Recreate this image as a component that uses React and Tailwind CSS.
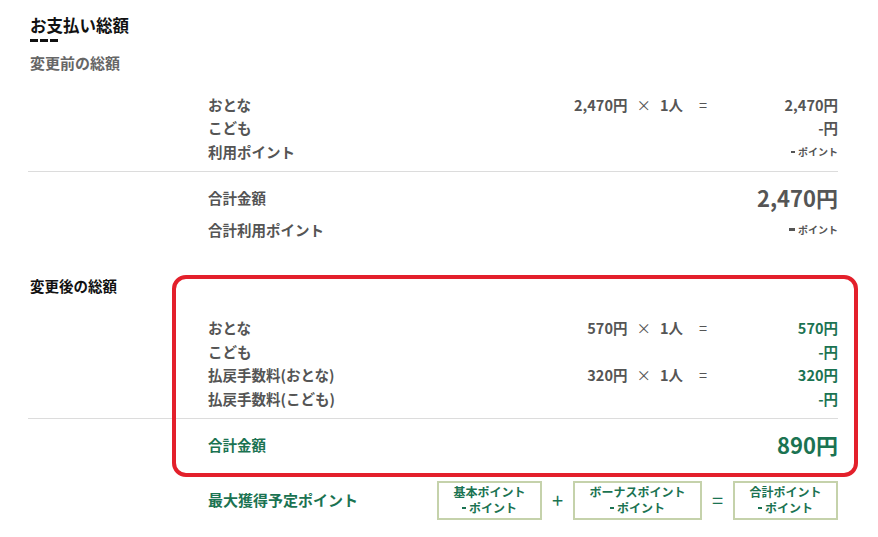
const font = { fontFamily: '"Noto Sans CJK JP", "Noto Sans", sans-serif' }

function Unit({ price }) {
  return (
    <span className="whitespace-pre">
      {price}
      <span className="mx-[9px] font-normal">×</span>
      1人
    </span>
  )
}

function Row({ label, price, amount, green = false }) {
  return (
    <div className="flex items-center h-[23.5px] text-[14.5px] font-bold text-[#555]">
      <span className="flex-1">{label}</span>
      {price && <Unit price={price} />}
      <span className="w-[40px] text-center font-normal">{price ? '=' : ''}</span>
      <span className={`w-[115px] text-right ${green ? 'text-[#1b7352]' : ''}`}>{amount}</span>
    </div>
  )
}

function NoPoint({ big = false }) {
  return (
    <span className="flex items-center text-[10px] font-bold">
      <span className={`${big ? 'w-[6px] h-[3px] mr-[3px]' : 'w-[4px] h-[1.5px] mr-[3px]'} bg-current`} />
      ポイント
    </span>
  )
}

function PointBox({ title, w }) {
  return (
    <div className={`${w} h-[39px] border-2 border-[#c5d2ab] flex flex-col items-center justify-center text-[12px] leading-[16px] font-bold text-[#1b7352]`}>
      <span>{title}</span>
      <span className="flex items-center">
        <span className="w-[4px] h-[1.5px] bg-current mr-[3px]" />
        ポイント
      </span>
    </div>
  )
}

export default function App() {
  return (
    <div style={font} className="relative w-[878px] h-[537px] bg-white overflow-hidden">
      <div className="pl-[28px] pr-[40px] pt-[14px]">
        <div className="pl-[2px] text-[16.5px] leading-[22px] font-bold text-[#111]">お支払い総額</div>
        <div className="pl-[2px] mt-[3px] flex gap-[2px]">
          <span className="w-[8px] h-[3px] bg-[#111]" />
          <span className="w-[8px] h-[3px] bg-[#111]" />
          <span className="w-[8px] h-[3px] bg-[#111]" />
        </div>
        <div className="pl-[2px] mt-[11px] text-[15px] leading-[20px] font-bold text-[#666]">変更前の総額</div>

        <div className="pl-[180px] mt-[20px]">
          <Row label="おとな" price="2,470円" amount="2,470円" />
          <Row label="こども" amount="-円" />
          <div className="flex items-center h-[23.5px] text-[14.5px] font-bold text-[#555]">
            <span className="flex-1">利用ポイント</span>
            <NoPoint />
          </div>
        </div>
        <div className="mt-[7px] h-px bg-[#dcdcdc]" />
        <div className="pl-[180px] mt-[11px] flex items-center h-[30px] font-bold text-[#555]">
          <span className="flex-1 text-[14.5px]">合計金額</span>
          <span className="text-[22px]">2,470円</span>
        </div>
        <div className="pl-[180px] mt-[6px] flex items-center h-[22px] font-bold text-[#555]">
          <span className="flex-1 text-[14.5px]">合計利用ポイント</span>
          <NoPoint big />
        </div>

        <div className="pl-[2px] mt-[35px] text-[14.5px] leading-[20px] font-bold text-[#111]">変更後の総額</div>
        <div className="pl-[180px] mt-[21px]">
          <Row label="おとな" price="570円" amount="570円" green />
          <Row label="こども" amount="-円" green />
          <Row label="払戻手数料(おとな)" price="320円" amount="320円" green />
          <Row label="払戻手数料(こども)" amount="-円" green />
        </div>
        <div className="mt-[7px] h-px bg-[#dcdcdc]" />
        <div className="pl-[180px] mt-[11px] flex items-center h-[30px] font-bold text-[#1b7352]">
          <span className="flex-1 text-[14.5px]">合計金額</span>
          <span className="text-[22px]">890円</span>
        </div>

        <div className="pl-[180px] mt-[21px] flex items-center font-bold text-[#1b7352]">
          <span className="flex-1 text-[15px]">最大獲得予定ポイント</span>
          <PointBox title="基本ポイント" w="w-[105px]" />
          <span className="w-[31px] text-center text-[20px] font-normal">+</span>
          <PointBox title="ボーナスポイント" w="w-[129px]" />
          <span className="w-[31px] text-center text-[20px] font-normal">=</span>
          <PointBox title="合計ポイント" w="w-[105px]" />
        </div>
      </div>

      <div className="absolute left-[172px] top-[275px] w-[686px] h-[202px] border-4 border-[#e3202b] rounded-[14px] pointer-events-none" />
    </div>
  )
}
